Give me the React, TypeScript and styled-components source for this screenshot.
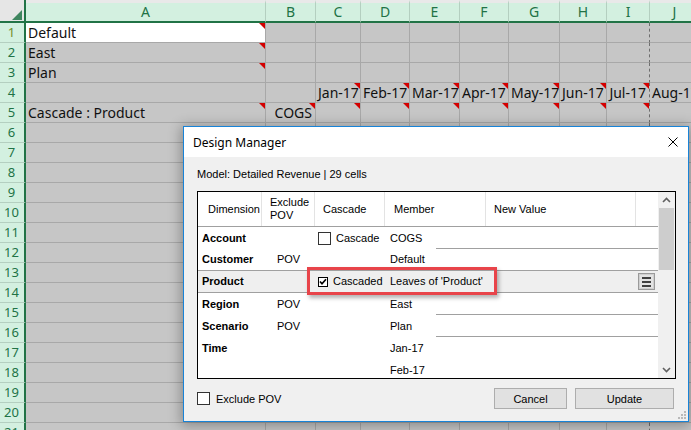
import React from "react";
import styled, { createGlobalStyle, css } from "styled-components";

const GlobalStyle = createGlobalStyle`
  html, body {
    margin: 0;
    padding: 0;
  }
  body {
    width: 691px;
    height: 430px;
    overflow: hidden;
    background: #ffffff;
    font-family: "Noto Sans", "Open Sans", sans-serif;
  }
`;

type Column = { key: string; width: number; pageBreak?: boolean };

const COLUMNS: Column[] = [
  { key: "A", width: 240 },
  { key: "B", width: 50 },
  { key: "C", width: 45 },
  { key: "D", width: 49 },
  { key: "E", width: 50 },
  { key: "F", width: 49 },
  { key: "G", width: 51 },
  { key: "H", width: 47 },
  { key: "I", width: 43, pageBreak: true },
  { key: "J", width: 50 },
];

const MONTHS = ["Jan-17", "Feb-17", "Mar-17", "Apr-17", "May-17", "Jun-17", "Jul-17", "Aug-17"];

type CellData = { text?: string; align?: "left" | "right"; note?: boolean };

const CELLS: Record<string, CellData> = {
  A1: { text: "Default", note: true },
  A2: { text: "East", note: true },
  A3: { text: "Plan", note: true },
  A5: { text: "Cascade : Product", note: true },
  B5: { text: "COGS", align: "right", note: true },
};
MONTHS.forEach((m, i) => {
  const col = "CDEFGHIJ"[i];
  CELLS[col + "4"] = { text: m, align: "right", note: true };
  CELLS[col + "5"] = { note: true };
});

const ROW_NUMBERS = Array.from({ length: 21 }, (_, i) => i + 1);

type Dim = {
  name: string;
  pov?: string;
  cascade?: "box" | "checked";
  member: string[];
  variant: "line" | "plain" | "selected" | "tall";
};

const DIMENSIONS: Dim[] = [
  { name: "Account", cascade: "box", member: ["COGS"], variant: "line" },
  { name: "Customer", pov: "POV", member: ["Default"], variant: "plain" },
  { name: "Product", cascade: "checked", member: ["Leaves of 'Product'"], variant: "selected" },
  { name: "Region", pov: "POV", member: ["East"], variant: "line" },
  { name: "Scenario", pov: "POV", member: ["Plan"], variant: "line" },
  { name: "Time", member: ["Jan-17", "Feb-17"], variant: "tall" },
];

const TABLE_COLUMNS = "64px 53px 70px 101px 150px 22px";

const App = () => {
  return (
    <>
      <GlobalStyle />
      <Sheet>
        <Corner>
          <CornerMark />
        </Corner>
        {COLUMNS.map((c) => (
          <ColHeader key={c.key}>{c.key}</ColHeader>
        ))}
        {ROW_NUMBERS.map((r) => (
          <React.Fragment key={r}>
            <RowHeader $active={r === 1}>{r}</RowHeader>
            {COLUMNS.map((c) => {
              const d = CELLS[c.key + r];
              return (
                <Cell
                  key={c.key}
                  $active={c.key === "A" && r === 1}
                  $align={d?.align}
                  $pageBreak={c.pageBreak}
                >
                  {d?.text}
                  {d?.note && <Note />}
                </Cell>
              );
            })}
          </React.Fragment>
        ))}

        <Dialog>
          <TitleBar>
            <Title>Design Manager</Title>
            <svg width="10" height="10" viewBox="0 0 10 10">
              <path d="M0.5 0.5 L9.5 9.5 M9.5 0.5 L0.5 9.5" stroke="#000" strokeWidth="1" />
            </svg>
          </TitleBar>
          <DialogBody>
            <ModelLine>Model: Detailed Revenue | 29 cells</ModelLine>
            <GridBox>
              <TableArea>
                <HeaderRow>
                  <HeaderCell $pad={10}>Dimension</HeaderCell>
                  <HeaderCell>
                    Exclude
                    <br />
                    POV
                  </HeaderCell>
                  <HeaderCell>Cascade</HeaderCell>
                  <HeaderCell $pad={9}>Member</HeaderCell>
                  <HeaderCell>New Value</HeaderCell>
                  <HeaderCell $last />
                </HeaderRow>
                {DIMENSIONS.map((d) => (
                  <BodyRow key={d.name} $variant={d.variant}>
                    <DimCell>{d.name}</DimCell>
                    <PovCell>{d.pov}</PovCell>
                    <CascadeCell>
                      {d.cascade === "box" && (
                        <>
                          <CheckBox />
                          <span>Cascade</span>
                        </>
                      )}
                      {d.cascade === "checked" && (
                        <>
                          <SmallCheck>
                            <svg width="8" height="8" viewBox="0 0 8 8">
                              <path d="M1 3.5 L3 5.8 L7 1.2" stroke="#000" strokeWidth="1.7" fill="none" />
                            </svg>
                          </SmallCheck>
                          <span>Cascaded</span>
                        </>
                      )}
                    </CascadeCell>
                    <MemberCell>
                      {d.member.map((m) => (
                        <div key={m}>{m}</div>
                      ))}
                    </MemberCell>
                    <div />
                    <ActionCell>
                      {d.variant === "selected" && (
                        <MenuButton>
                          <span />
                          <span />
                          <span />
                        </MenuButton>
                      )}
                    </ActionCell>
                    {d.variant === "selected" && <Highlight />}
                  </BodyRow>
                ))}
              </TableArea>
              <ScrollBar>
                <ScrollArrow>
                  <svg width="9" height="6" viewBox="0 0 9 6">
                    <path d="M1 5 L4.5 1.5 L8 5" stroke="#606060" strokeWidth="1.6" fill="none" />
                  </svg>
                </ScrollArrow>
                <ScrollThumb />
                <ScrollTrack />
                <ScrollArrow>
                  <svg width="9" height="6" viewBox="0 0 9 6">
                    <path d="M1 1 L4.5 4.5 L8 1" stroke="#606060" strokeWidth="1.6" fill="none" />
                  </svg>
                </ScrollArrow>
              </ScrollBar>
            </GridBox>
            <Footer>
              <CheckBox />
              <FooterLabel>Exclude POV</FooterLabel>
              <Spacer />
              <Button $width={73}>Cancel</Button>
              <Button $width={99}>Update</Button>
            </Footer>
          </DialogBody>
          <Grip>
            <svg width="9" height="9" viewBox="0 0 9 9">
              {[
                [6, 0],
                [3, 3],
                [6, 3],
                [0, 6],
                [3, 6],
                [6, 6],
              ].map(([x, y]) => (
                <rect key={`${x}-${y}`} x={x} y={y} width="2" height="2" fill="#b9b9b9" />
              ))}
            </svg>
          </Grip>
        </Dialog>
      </Sheet>
    </>
  );
};

/* ---------- spreadsheet ---------- */

const Sheet = styled.div`
  position: relative;
  width: 691px;
  height: 430px;
  overflow: hidden;
  display: grid;
  grid-template-columns: 26px ${COLUMNS.map((c) => c.width + "px").join(" ")};
  grid-template-rows: 23px repeat(21, 20px);
  background: #c6c6c6;
`;

const Corner = styled.div`
  box-sizing: border-box;
  background: #e6e6e6;
  border-bottom: 2px solid #217346;
  border-right: 2px solid #217346;
  display: flex;
  align-items: flex-end;
  justify-content: flex-end;
  padding: 0 2px 1px 0;
`;

const CornerMark = styled.div`
  width: 10px;
  height: 10px;
  background: #217346;
  opacity: 0.85;
  clip-path: polygon(100% 0, 100% 100%, 0 100%);
`;

const ColHeader = styled.div`
  box-sizing: border-box;
  background: #d3f0e0;
  border-top: 3px solid #e9e9e9;
  border-bottom: 2px solid #217346;
  border-right: 1px solid #b4cfc0;
  color: #217346;
  font-size: 14px;
  line-height: 18px;
  text-align: center;
`;

const RowHeader = styled.div<{ $active?: boolean }>`
  box-sizing: border-box;
  background: #d3f0e0;
  border-right: 2px solid #217346;
  border-bottom: 1px solid #b4cfc0;
  color: ${(p) => (p.$active ? "#6f8f2a" : "#217346")};
  font-size: 13px;
  line-height: 19px;
  text-align: center;
  padding-right: 1px;
`;

const Cell = styled.div<{ $active?: boolean; $align?: "left" | "right"; $pageBreak?: boolean }>`
  position: relative;
  box-sizing: border-box;
  background: ${(p) => (p.$active ? "#ffffff" : "transparent")};
  border-bottom: 1px solid #a8a8a8;
  border-right: 1px ${(p) => (p.$pageBreak ? "dashed #6e6e6e" : "solid #a8a8a8")};
  color: #111;
  font-size: 14px;
  line-height: 19px;
  padding: 0 3px 0 2px;
  white-space: nowrap;
  text-align: ${(p) => p.$align ?? "left"};
`;

const Note = styled.span`
  position: absolute;
  top: 0;
  right: 0;
  width: 6px;
  height: 6px;
  background: #d40000;
  clip-path: polygon(0 0, 100% 0, 100% 100%);
`;

/* ---------- dialog ---------- */

const Dialog = styled.div`
  position: absolute;
  left: 183px;
  top: 126px;
  width: 506px;
  height: 296px;
  box-sizing: border-box;
  border: 1px solid #1883d7;
  background: #f0f0f0;
  box-shadow: 0 2px 12px 2px rgba(0, 0, 0, 0.3);
  display: flex;
  flex-direction: column;
`;

const TitleBar = styled.div`
  height: 30px;
  flex: none;
  background: #ffffff;
  display: flex;
  align-items: center;
  justify-content: space-between;
  padding: 0 10px 0 9px;
`;

const Title = styled.span`
  font-family: "Noto Sans", "Open Sans", sans-serif;
  font-size: 12px;
  color: #000;
`;

const DialogBody = styled.div`
  flex: 1;
  display: flex;
  flex-direction: column;
  padding: 10px 12px 0 13px;
  font-family: "Liberation Sans", Arial, sans-serif;
  font-size: 11px;
  color: #000;
`;

const ModelLine = styled.div`
  height: 14px;
  line-height: 14px;
  margin-bottom: 10px;
`;

const GridBox = styled.div`
  height: 188px;
  box-sizing: border-box;
  border: 1px solid #000;
  background: #ffffff;
  display: flex;
  overflow: hidden;
`;

const TableArea = styled.div`
  flex: 1;
  display: flex;
  flex-direction: column;
  overflow: hidden;
`;

const HeaderRow = styled.div`
  display: grid;
  grid-template-columns: ${TABLE_COLUMNS};
  height: 35px;
  flex: none;
  box-sizing: border-box;
  border-bottom: 1px solid #a0a0a0;
`;

const HeaderCell = styled.div<{ $pad?: number; $last?: boolean }>`
  display: flex;
  align-items: center;
  padding-left: ${(p) => p.$pad ?? 8}px;
  line-height: 13px;
  border-right: ${(p) => (p.$last ? "none" : "1px solid #e3e3e3")};
`;

const BodyRow = styled.div<{ $variant: Dim["variant"] }>`
  position: relative;
  display: grid;
  grid-template-columns: ${TABLE_COLUMNS};
  flex: none;
  box-sizing: border-box;
  height: 22px;
  align-items: center;
  line-height: 13px;
  ${(p) =>
    p.$variant === "line" &&
    css`
      background: linear-gradient(#a0a0a0, #a0a0a0) right bottom / calc(100% - 238px) 1px no-repeat;
    `}
  ${(p) =>
    p.$variant === "plain" &&
    css`
      height: 21px;
    `}
  ${(p) =>
    p.$variant === "selected" &&
    css`
      height: 23px;
      background: #efefef;
      border-top: 1px solid #a0a0a0;
      border-bottom: 1px solid #a0a0a0;
    `}
  ${(p) =>
    p.$variant === "tall" &&
    css`
      height: auto;
      align-items: start;
      line-height: 22px;
    `}
`;

const DimCell = styled.div`
  padding-left: 4px;
  font-weight: bold;
`;

const PovCell = styled.div`
  text-align: center;
`;

const CascadeCell = styled.div`
  display: flex;
  align-items: center;
  gap: 5px;
  padding-left: 3px;
  white-space: nowrap;
`;

const CheckBox = styled.span`
  width: 13px;
  height: 13px;
  box-sizing: border-box;
  border: 1px solid #333;
  background: #fff;
  flex: none;
`;

const SmallCheck = styled.span`
  width: 10px;
  height: 10px;
  box-sizing: border-box;
  border: 1px solid #000;
  background: #fff;
  display: flex;
  align-items: center;
  justify-content: center;
  flex: none;
`;

const MemberCell = styled.div`
  padding-left: 5px;
  white-space: nowrap;
`;

const ActionCell = styled.div`
  display: flex;
  align-items: center;
  justify-content: center;
`;

const MenuButton = styled.div`
  width: 17px;
  height: 17px;
  box-sizing: border-box;
  border: 1px solid #9a9a9a;
  box-shadow: inset 0 0 0 1px #d0d0d0;
  background: #e3e3e3;
  display: flex;
  flex-direction: column;
  align-items: center;
  justify-content: center;
  gap: 2px;
  margin-left: -2px;

  span {
    width: 9px;
    height: 2px;
    background: #404040;
  }
`;

const Highlight = styled.div`
  position: absolute;
  left: 109px;
  top: -4px;
  width: 190px;
  height: 28px;
  box-sizing: border-box;
  border: 3px solid #e8444a;
  box-shadow: 2px 3px 4px rgba(0, 0, 0, 0.3);
  pointer-events: none;
`;

const ScrollBar = styled.div`
  width: 17px;
  flex: none;
  background: #f0f0f0;
  display: flex;
  flex-direction: column;
`;

const ScrollArrow = styled.div`
  height: 16px;
  flex: none;
  display: flex;
  align-items: center;
  justify-content: center;
`;

const ScrollThumb = styled.div`
  height: 62px;
  flex: none;
  margin: 0 1px;
  background: #cdcdcd;
`;

const ScrollTrack = styled.div`
  flex: 1;
`;

const Footer = styled.div`
  margin-top: 9px;
  margin-right: 2px;
  height: 21px;
  display: flex;
  align-items: center;
`;

const FooterLabel = styled.span`
  margin-left: 6px;
`;

const Spacer = styled.div`
  flex: 1;
`;

const Button = styled.div<{ $width: number }>`
  width: ${(p) => p.$width}px;
  height: 21px;
  box-sizing: border-box;
  border: 1px solid #adadad;
  background: #e1e1e1;
  display: flex;
  align-items: center;
  justify-content: center;
  margin-left: 8px;
`;

const Grip = styled.div`
  position: absolute;
  right: 1px;
  bottom: 1px;
  width: 9px;
  height: 9px;
  display: flex;
`;

export default App;
